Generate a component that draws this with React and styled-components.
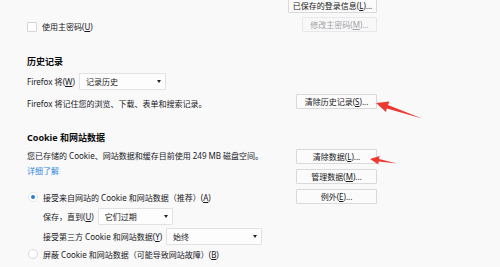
import React from 'react'
import styled, { createGlobalStyle } from 'styled-components'

const GlobalStyle = createGlobalStyle`
  html, body {
    margin: 0;
    background: #f9f9fa;
  }
  body {
    font-family: "Noto Sans", "Noto Sans CJK SC", sans-serif;
    font-size: 8px;
    color: #18181a;
  }
  * {
    box-sizing: border-box;
  }
`

const Page = styled.div`
  position: relative;
  width: 500px;
  height: 267px;
  overflow: hidden;
  padding: 0 123px 0 27px;
`

const TopRow = styled.div`
  display: flex;
  justify-content: space-between;
  align-items: flex-end;
  margin-top: -2px;
`

const ButtonStack = styled.div`
  display: flex;
  flex-direction: column;
  align-items: flex-end;
  gap: ${p => p.gap || 4}px;
`

const Button = styled.button`
  width: ${p => p.width}px;
  height: 15px;
  padding: 0;
  font: inherit;
  font-size: 8px;
  line-height: 13px;
  color: ${p => (p.disabled ? '#a3a3a6' : '#18181a')};
  background: ${p => (p.disabled ? '#f8f8f9' : '#fbfbfb')};
  border: 1px solid ${p => (p.disabled ? '#e8e8ea' : '#d9d9dc')};
  border-radius: 1px;
  white-space: nowrap;
`

const CheckRow = styled.label`
  display: flex;
  align-items: center;
  gap: 5px;
  height: 15px;
  margin-bottom: -2px;
  line-height: 11px;
`

const Checkbox = styled.span`
  width: 10px;
  height: 10px;
  background: #fff;
  border: 1px solid #d4d4d6;
  border-radius: 1px;
`

const Heading = styled.h2`
  margin: ${p => p.top}px 0 0;
  font-size: 9px;
  font-weight: bold;
  line-height: 12px;
  color: #0c0c0d;
`

const FieldRow = styled.div`
  display: flex;
  align-items: center;
  gap: 4px;
  margin-top: ${p => p.top || 0}px;
  padding-left: ${p => p.indent || 0}px;
  line-height: 11px;
`

const Select = styled.div`
  display: flex;
  align-items: center;
  justify-content: space-between;
  width: ${p => p.width}px;
  height: 17px;
  padding: 0 4px 0 6px;
  background: #fdfdfd;
  border: 1px solid #e2e2e4;
  border-radius: 1px;
`

const Caret = styled.span`
  width: 0;
  height: 0;
  border-left: 2.5px solid transparent;
  border-right: 2.5px solid transparent;
  border-top: 3px solid #222;
`

const Row = styled.div`
  display: flex;
  justify-content: space-between;
  align-items: ${p => p.align || 'center'};
  margin-top: ${p => p.top || 0}px;
`

const Column = styled.div`
  display: flex;
  flex-direction: column;
  padding-top: 1px;
`

const Text = styled.p`
  margin: ${p => p.top || 0}px 0 0;
  line-height: 11px;
`

const Link = styled.a`
  margin-top: 4px;
  line-height: 11px;
  color: #2f87e0;
  text-decoration: none;
`

const RadioRow = styled.label`
  display: flex;
  align-items: center;
  gap: 5px;
  height: 12px;
  margin-top: ${p => p.top || 0}px;
  padding-left: 1px;
`

const Radio = styled.span`
  position: relative;
  width: 10px;
  height: 10px;
  border-radius: 50%;
  background: #fff;
  border: 1px solid ${p => (p.checked ? '#e4e4e6' : '#d8d8da')};

  &::after {
    content: '';
    display: ${p => (p.checked ? 'block' : 'none')};
    position: absolute;
    left: 2px;
    top: 2px;
    width: 4px;
    height: 4px;
    border-radius: 50%;
    background: #2a7dd2;
  }
`

const Overlay = styled.svg`
  position: absolute;
  left: 0;
  top: 0;
  pointer-events: none;
`

const Key = ({ k }) => (
  <>
    (<u>{k}</u>)
  </>
)

export default function App() {
  return (
    <Page>
      <GlobalStyle />
      <TopRow>
        <CheckRow>
          <Checkbox />
          <span>使用主密码<Key k="U" /></span>
        </CheckRow>
        <ButtonStack>
          <Button width={89}>已保存的登录信息<Key k="L" />...</Button>
          <Button width={75} disabled>修改主密码<Key k="M" />...</Button>
        </ButtonStack>
      </TopRow>

      <Heading top={24}>历史记录</Heading>
      <FieldRow top={5}>
        <span>Firefox 将<Key k="W" /></span>
        <Select width={87}>
          <span>记录历史</span>
          <Caret />
        </Select>
      </FieldRow>
      <Row top={4}>
        <Text top={4}>Firefox 将记住您的浏览、下载、表单和搜索记录。</Text>
        <Button width={81}>清除历史记录<Key k="S" />...</Button>
      </Row>

      <Heading top={23}>Cookie 和网站数据</Heading>
      <Row top={5} align="flex-start">
        <Column>
          <Text>您已存储的 Cookie、网站数据和缓存目前使用 249 MB 磁盘空间。</Text>
          <Link href="#">详细了解</Link>
          <RadioRow top={15}>
            <Radio checked />
            <span>接受来自网站的 Cookie 和网站数据（推荐）<Key k="A" /></span>
          </RadioRow>
          <FieldRow top={5} indent={16}>
            <span>保存，直到<Key k="U" /></span>
            <Select width={75}>
              <span>它们过期</span>
              <Caret />
            </Select>
          </FieldRow>
          <FieldRow top={3} indent={16}>
            <span>接受第三方 Cookie 和网站数据<Key k="Y" /></span>
            <Select width={96}>
              <span>始终</span>
              <Caret />
            </Select>
          </FieldRow>
          <RadioRow top={3}>
            <Radio />
            <span>屏蔽 Cookie 和网站数据（可能导致网站故障）<Key k="B" /></span>
          </RadioRow>
        </Column>
        <ButtonStack gap={5}>
          <Button width={81}>清除数据<Key k="L" />...</Button>
          <Button width={81}>管理数据<Key k="M" />...</Button>
          <Button width={81}>例外<Key k="E" />...</Button>
        </ButtonStack>
      </Row>

      <Overlay width="500" height="267" viewBox="0 0 500 267">
        <polygon
          fill="#ec3a32"
          points="376,103 389.5,101.5 388,105 422,118.5 386.8,108.4 386,112"
        />
        <polygon
          fill="#ec3a32"
          points="370,159 379.5,156 379.1,159 397,163.5 378.7,161.6 378.3,164.5"
        />
      </Overlay>
    </Page>
  )
}
